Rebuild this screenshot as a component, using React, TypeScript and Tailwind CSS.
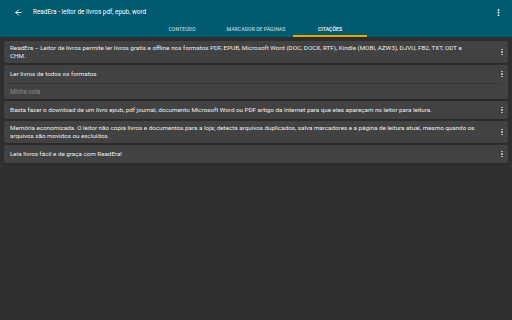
import type { ReactNode } from "react";
import { ArrowLeft, MoreVertical } from "lucide-react";

const tabs = ["Conteúdo", "Marcador de páginas", "Citações"];

function Kebab() {
  return (
    <div className="flex w-[10px] shrink-0 flex-col items-center justify-center gap-[1px] self-center">
      <span className="h-[1.5px] w-[1.5px] bg-[#b0b0b0]" />
      <span className="h-[1.5px] w-[1.5px] bg-[#b0b0b0]" />
      <span className="h-[1.5px] w-[1.5px] bg-[#b0b0b0]" />
    </div>
  );
}

function Quote({ children }: { children: ReactNode }) {
  return (
    <div className="flex min-h-[18px] items-center rounded-[2px] bg-[#424242] py-[3px] pl-[6px] pr-[1px] shadow-sm">
      <p className="flex-1 pr-[12px] text-[6.25px] leading-[8px] text-[#ececec]">{children}</p>
      <Kebab />
    </div>
  );
}

export default function App() {
  return (
    <div
      className="flex h-[320px] w-[512px] flex-col bg-[#303030]"
      style={{ fontFamily: "Roboto, 'Noto Sans', sans-serif" }}
    >
      <header className="bg-[#005a70] shadow">
        <div className="flex h-[25px] items-center pl-[14px] pr-[9px]">
          <ArrowLeft className="h-[9px] w-[9px] text-white" strokeWidth={2.5} />
          <span className="ml-[10px] flex-1 text-[6.4px] text-white">ReadEra - leitor de livros pdf, epub, word</span>
          <MoreVertical className="h-[9px] w-[9px] text-white" strokeWidth={3} />
        </div>
        <div className="flex h-[12px] justify-center">
          {tabs.map((t, i) => (
            <div
              key={t}
              className={`flex w-[74px] items-center justify-center border-b-2 text-[5.2px] font-medium uppercase ${
                i === 2 ? "border-[#e5a800] text-white" : "border-transparent text-[#b7cdd3]"
              }`}
            >
              {t}
            </div>
          ))}
        </div>
      </header>

      <div className="flex flex-col gap-[2px] px-[4px] pt-[4px]">
        <Quote>
          ReadEra – Leitor de livros permite ler livros gratis e offline nos formatos PDF, EPUB, Microsoft Word (DOC, DOCX, RTF), Kindle (MOBI, AZW3), DJVU, FB2, TXT, ODT e
          <br />
          CHM.
        </Quote>
        <div className="rounded-[2px] bg-[#424242] shadow-sm">
          <div className="flex min-h-[18px] items-center py-[3px] pl-[6px] pr-[1px]">
            <p className="flex-1 text-[6.25px] leading-[8px] text-[#ececec]">Ler livros de todos os formatos</p>
            <Kebab />
          </div>
          <div className="ml-[4px] mr-[8px] h-px bg-[#383838]" />
          <div className="flex min-h-[15px] items-center pl-[6px]">
            <p className="text-[6.25px] italic leading-[8px] text-[#8c8c8c]">Minha nota</p>
          </div>
        </div>
        <Quote>
          Basta fazer o download de um livro epub, pdf journal, documento Microsoft Word ou PDF artigo da Internet para que eles apareçam no leitor para leitura.
        </Quote>
        <Quote>
          Memória economizada. O leitor não copia livros e documentos para a loja; detecta arquivos duplicados, salva marcadores e a página de leitura atual, mesmo quando os arquivos são movidos ou excluídos.
        </Quote>
        <Quote>Leia livros fácil e de graça com ReadEra!</Quote>
      </div>
    </div>
  );
}
